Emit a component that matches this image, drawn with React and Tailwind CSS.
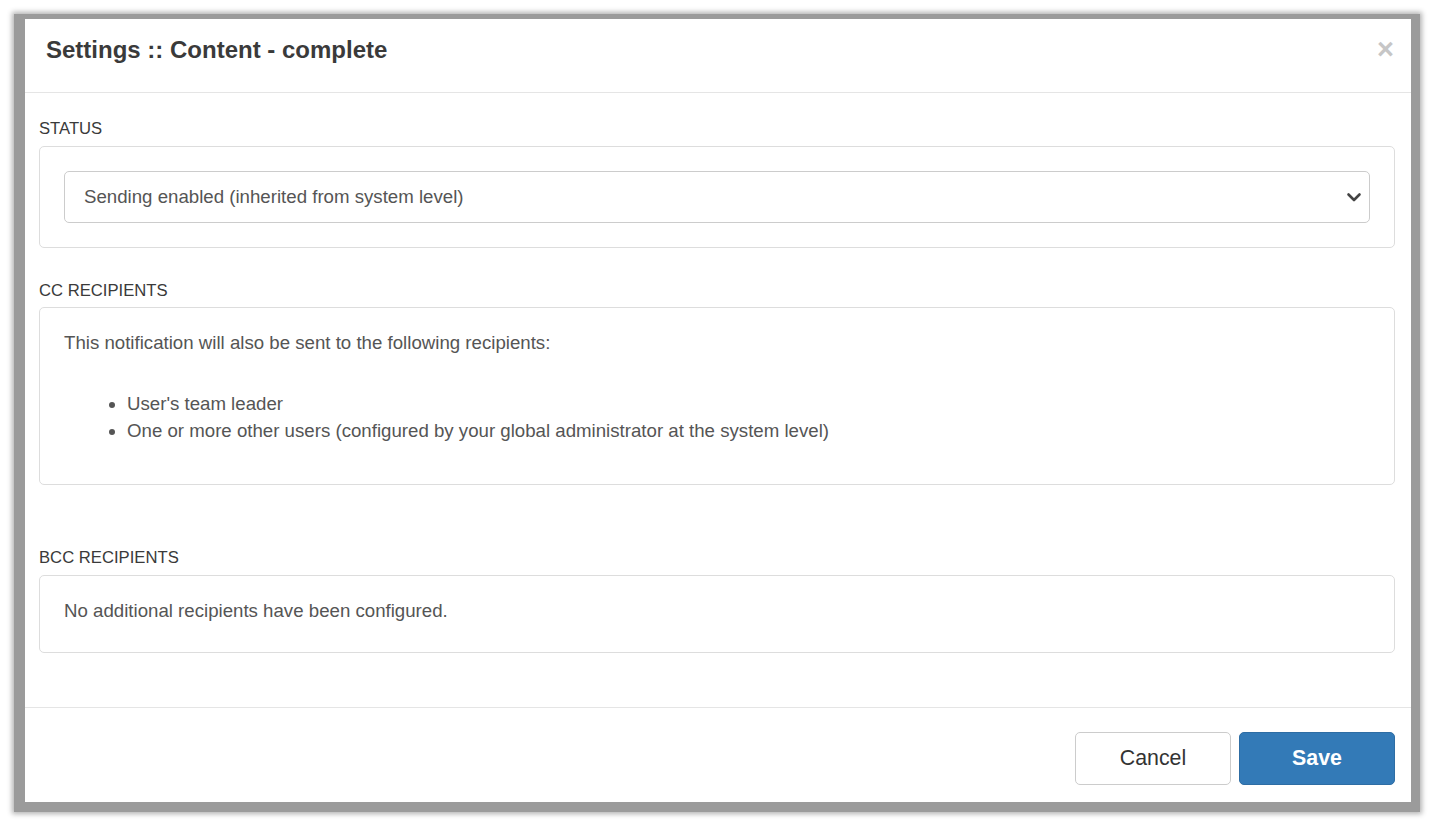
export default function App() {
  return (
    <div
      className="min-h-[821px] w-full bg-white pl-[14px] pt-[14px]"
      style={{ fontFamily: '"Liberation Sans", Arial, Helvetica, sans-serif' }}
    >
      <div className="w-[1406px] border-[#9b9b9b] border-l-[11px] border-t-[5px] border-r-[9px] border-b-[10px] shadow-[0_0_5px_2px_rgba(0,0,0,0.3)]">
        <div className="flex h-[783px] w-[1386px] flex-col bg-white">
          {/* Header */}
          <div className="relative flex h-[74px] items-start border-b border-[#e5e5e5] pl-[21px] pr-[18px] pt-[18px]">
            <h4 className="text-[24px] font-bold leading-[26px] text-[#3a3a3a]">
              Settings :: Content - complete
            </h4>
            <button className="absolute right-[17px] top-[15px] text-[29px] font-bold leading-[30px] text-[#c6c6c6]">
              ×
            </button>
          </div>

          {/* Body */}
          <div className="flex-1 pl-[14px] pr-[16px] pt-[24px] text-[18.67px] leading-[26.67px] text-[#555]">
            <div className="mb-[5px] h-[24px] text-[16.67px] leading-[24px] text-[#3a3a3a]">STATUS</div>
            <div className="rounded-[5px] border border-[#ddd] p-[24px]">
              <div className="flex h-[52px] items-center justify-between rounded-[5px] border border-[#ccc] pl-[19px] pr-[7px]">
                <span>Sending enabled (inherited from system level)</span>
                <svg width="16" height="16" viewBox="0 0 16 16" fill="none">
                  <path d="M2.5 5.5 L8 11 L13.5 5.5" stroke="#444" strokeWidth="2.6" strokeLinecap="round" strokeLinejoin="round" />
                </svg>
              </div>
            </div>

            <div className="mb-[4px] mt-[31px] h-[24px] text-[16.67px] leading-[24px] text-[#3a3a3a]">CC RECIPIENTS</div>
            <div className="rounded-[5px] border border-[#ddd] px-[24px] pb-[24px] pt-[22px]">
              <p className="mb-[33px]">This notification will also be sent to the following recipients:</p>
              <ul className="mb-[16px] list-disc pl-[63px] leading-[27px]">
                <li>User's team leader</li>
                <li>One or more other users (configured by your global administrator at the system level)</li>
              </ul>
            </div>

            <div className="mb-[5px] mt-[61px] h-[24px] text-[16.67px] leading-[24px] text-[#3a3a3a]">BCC RECIPIENTS</div>
            <div className="rounded-[5px] border border-[#ddd] px-[24px] pb-[28px] pt-[22px]">
              <p>No additional recipients have been configured.</p>
            </div>
          </div>

          {/* Footer */}
          <div className="flex justify-end gap-[8px] border-t border-[#e5e5e5] pb-[17px] pr-[16px] pt-[24px]">
            <button className="h-[53px] w-[156px] rounded-[5px] border border-[#ccc] bg-white text-[21.33px] text-[#333]">
              Cancel
            </button>
            <button className="h-[53px] w-[156px] rounded-[5px] border border-[#2e6da4] bg-[#337ab7] text-[21.33px] font-bold text-white">
              Save
            </button>
          </div>
        </div>
      </div>
    </div>
  );
}
